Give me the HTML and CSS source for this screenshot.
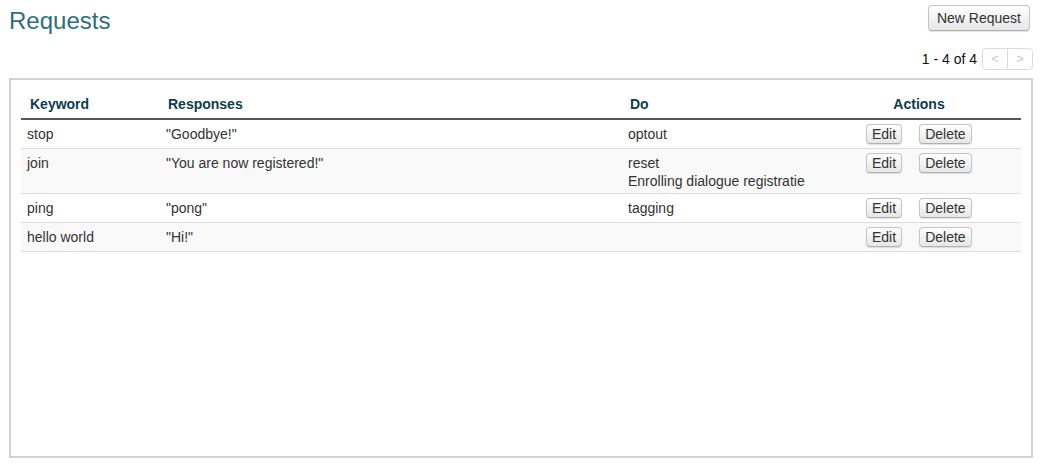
FILE: index.html
```html
<!DOCTYPE html>
<html>
<head>
<meta charset="utf-8">
<link rel="stylesheet" href="styles.css">
</head>
<body>
<div class="page">
  <div class="topbar">
    <h1 class="title">Requests</h1>
    <button class="btn btn-new">New Request</button>
  </div>
  <div class="pager">
    <span class="pager-info">1 - 4 of 4</span>
    <div class="pager-btns">
      <span class="pbtn">&lt;</span><span class="pbtn">&gt;</span>
    </div>
  </div>
  <div class="frame">
    <table class="grid">
      <colgroup>
        <col class="c-key"><col class="c-resp"><col class="c-do"><col class="c-act"><col class="c-rest">
      </colgroup>
      <thead>
        <tr><th class="h-key">Keyword</th><th>Responses</th><th>Do</th><th class="h-act">Actions</th><th></th></tr>
      </thead>
      <tbody>
        <tr>
          <td>stop</td><td>"Goodbye!"</td><td>optout</td>
          <td class="acts" colspan="2"><button class="btn btn-sm">Edit</button><button class="btn btn-sm">Delete</button></td>
        </tr>
        <tr class="odd">
          <td>join</td><td>"You are now registered!"</td><td><div>reset</div><div class="sub">Enrolling dialogue registratie</div></td>
          <td class="acts" colspan="2"><button class="btn btn-sm">Edit</button><button class="btn btn-sm">Delete</button></td>
        </tr>
        <tr>
          <td>ping</td><td>"pong"</td><td>tagging</td>
          <td class="acts" colspan="2"><button class="btn btn-sm">Edit</button><button class="btn btn-sm">Delete</button></td>
        </tr>
        <tr class="odd">
          <td>hello world</td><td>"Hi!"</td><td></td>
          <td class="acts" colspan="2"><button class="btn btn-sm">Edit</button><button class="btn btn-sm">Delete</button></td>
        </tr>
      </tbody>
    </table>
  </div>
</div>
</body>
</html>
```

FILE: styles.css
```css
html, body {
  margin: 0;
  padding: 0;
  background: #fff;
}
body {
  font-family: "Liberation Sans", Arial, sans-serif;
  font-size: 14px;
  color: #333;
}
.page {
  padding: 4px 12px 0 9px;
}
.topbar {
  display: flex;
  justify-content: space-between;
  align-items: flex-start;
}
.title {
  margin: 0;
  font-size: 24px;
  font-weight: normal;
  line-height: 34px;
  color: #2f6e80;
}
.btn {
  font-family: "Liberation Sans", Arial, sans-serif;
  font-size: 14px;
  color: #333;
  background: linear-gradient(#ffffff, #e6e6e6);
  border: 1px solid #c4c4c4;
  border-bottom-color: #b0b0b0;
  border-radius: 4px;
  box-shadow: 0 1px 1px rgba(0,0,0,0.12);
  cursor: pointer;
}
.btn-new {
  height: 26px;
  padding: 0 8px;
  margin-top: 1px;
  margin-right: 3px;
  line-height: 24px;
}
.pager {
  display: flex;
  justify-content: flex-end;
  align-items: center;
  gap: 5px;
  margin-top: 10px;
  height: 22px;
}
.pager-info {
  color: #111;
  line-height: 20px;
}
.pager-btns {
  display: flex;
  border: 1px solid #dcdcdc;
  border-radius: 4px;
  height: 20px;
}
.pbtn {
  width: 24px;
  text-align: center;
  line-height: 20px;
  color: #c8c8c8;
  font-size: 13px;
}
.pbtn + .pbtn {
  border-left: 1px solid #dcdcdc;
}
.frame {
  margin-top: 8px;
  height: 366px;
  border: 2px solid #d3d3d3;
  padding: 10px 10px 0 10px;
}
.grid {
  width: 1000px;
  border-collapse: collapse;
  table-layout: fixed;
}
.c-key { width: 139px; }
.c-resp { width: 462px; }
.c-do { width: 238px; }
.c-act { width: 118px; }
.c-rest { width: 43px; }
.grid th {
  text-align: left;
  font-weight: bold;
  color: #0e3c4d;
  padding: 6px 6px 5px 8px;
  line-height: 17px;
  border-bottom: 2px solid #555;
}
.grid th.h-key { padding-left: 9px; }
.grid th.h-act { text-align: center; padding-left: 0; padding-right: 0; }
.grid td {
  vertical-align: top;
  padding: 4px 6px;
  line-height: 20px;
  border-bottom: 1px solid #dddddd;
}
.grid tr.odd td {
  background: #f9f9f9;
}
.sub {
  line-height: 16px;
}
.acts {
  white-space: nowrap;
}
.btn-sm {
  height: 20px;
  padding: 0 5px;
  line-height: 18px;
  vertical-align: top;
  margin-right: 17px;
}
```
